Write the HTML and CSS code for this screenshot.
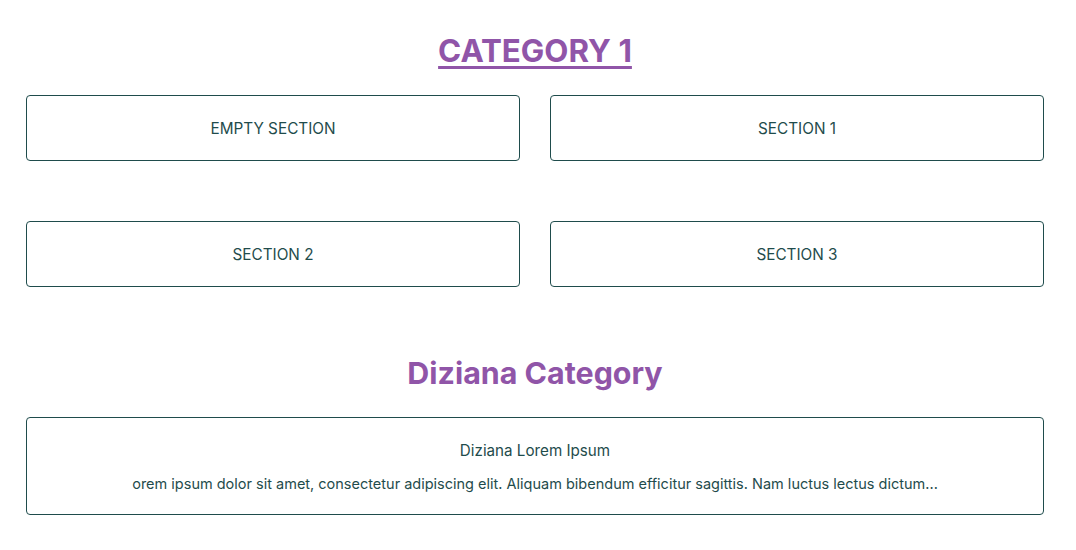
FILE: index.html
```html
<!DOCTYPE html>
<html lang="en">
<head>
<meta charset="utf-8">
<title>Categories</title>
<link rel="stylesheet" href="styles.css">
</head>
<body>
<main class="page">
  <section class="category">
    <h2 class="category-title"><a href="#" class="category-link">CATEGORY 1</a></h2>
    <div class="section-grid">
      <a href="#" class="section-card">EMPTY SECTION</a>
      <a href="#" class="section-card">SECTION 1</a>
      <a href="#" class="section-card">SECTION 2</a>
      <a href="#" class="section-card">SECTION 3</a>
    </div>
  </section>
  <section class="category category-second">
    <h2 class="category-title category-title-plain">Diziana Category</h2>
    <div class="post-card">
      <div class="post-title">Diziana Lorem Ipsum</div>
      <p class="post-excerpt">orem ipsum dolor sit amet, consectetur adipiscing elit. Aliquam bibendum efficitur sagittis. Nam luctus lectus dictum...</p>
    </div>
  </section>
</main>
</body>
</html>
```
FILE: styles.css
```css
* { box-sizing: border-box; }
html, body { margin: 0; padding: 0; background: #fff; }
body {
  font-family: Inter, "Noto Sans", sans-serif;
  color: #1f4c4c;
}
.page {
  width: 1018px;
  margin-left: 26px;
  padding-top: 32px;
}
.category-title {
  margin: 0;
  text-align: center;
  font-size: 31.3px;
  font-weight: 700;
  line-height: 38px;
  color: #9055a8;
}
.category-title-plain { font-size: 30.4px; }
.category-link {
  color: #9055a8;
  text-decoration: underline;
  text-decoration-thickness: 3px;
  text-underline-offset: 4px;
}
.section-grid {
  margin-top: 25px;
  display: grid;
  grid-template-columns: 1fr 1fr;
  column-gap: 30px;
  row-gap: 60px;
}
.section-card {
  height: 66px;
  display: flex;
  align-items: center;
  justify-content: center;
  border: 1px solid #1f4c4c;
  border-radius: 4px;
  color: #1f4c4c;
  text-decoration: none;
  font-size: 15.3px;
}
.category-second { margin-top: 67px; }
.post-card {
  margin-top: 25px;
  height: 98px;
  border: 1px solid #1f4c4c;
  border-radius: 4px;
  display: flex;
  flex-direction: column;
  align-items: center;
  padding-top: 22px;
}
.post-title { font-size: 15.2px; line-height: 22px; }
.post-excerpt { margin: 12px 0 0; font-size: 14.5px; line-height: 20px; }
```
